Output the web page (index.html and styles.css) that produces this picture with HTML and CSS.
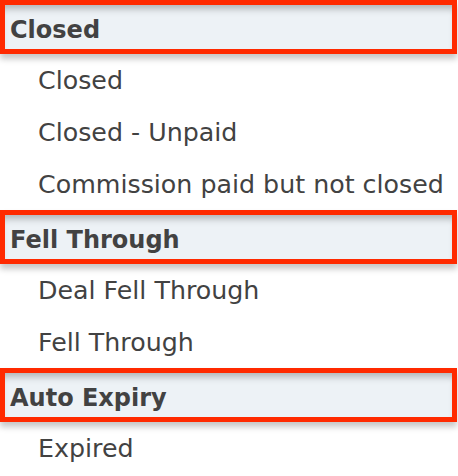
FILE: index.html
```html
<!DOCTYPE html>
<html>
<head>
<meta charset="utf-8">
<link rel="stylesheet" href="styles.css">
</head>
<body>
<div class="list">
  <div class="group-header"><span>Closed</span></div>
  <div class="item">Closed</div>
  <div class="item">Closed - Unpaid</div>
  <div class="item">Commission paid but not closed</div>
  <div class="group-header"><span>Fell Through</span></div>
  <div class="item">Deal Fell Through</div>
  <div class="item">Fell Through</div>
  <div class="group-header"><span>Auto Expiry</span></div>
  <div class="item">Expired</div>
</div>
</body>
</html>
```
FILE: styles.css
```css
html, body {
  margin: 0;
  padding: 0;
  background: #ffffff;
}
body {
  font-family: "DejaVu Sans", "Liberation Sans", sans-serif;
  color: #424242;
  width: 458px;
  height: 476px;
  overflow: hidden;
}
.list {
  display: flex;
  flex-direction: column;
}
.group-header {
  position: relative;
  z-index: 1;
  box-sizing: border-box;
  height: 54px;
  margin-right: 1px;
  border: 5px solid #ff2a00;
  background: #edf2f6;
  box-shadow: inset 0 8px 7px -4px rgba(0, 0, 0, 0.25), 0 5px 6px rgba(0, 0, 0, 0.22);
  display: flex;
  align-items: center;
  padding: 5px 0 0 5px;
  font-weight: bold;
  font-size: 24px;
  color: #424242;
}
.item {
  height: 52px;
  display: flex;
  align-items: center;
  padding-left: 38px;
  font-size: 25.3px;
  color: #424242;
}
```
